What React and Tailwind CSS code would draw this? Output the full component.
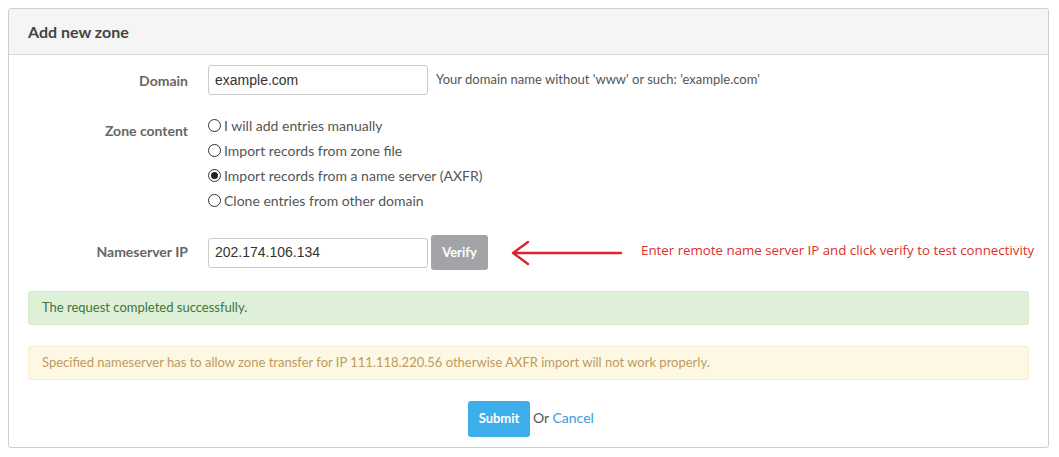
import React from "react";

function Radio({ checked, label }) {
  return (
    <label className="flex items-center h-[25px] text-[14px] text-[#555]">
      <span className="w-[13px] h-[13px] rounded-full border border-[#333] flex items-center justify-center mr-[3px] bg-white">
        {checked && <span className="w-[7px] h-[7px] rounded-full bg-[#222]" />}
      </span>
      <span>{label}</span>
    </label>
  );
}

export default function App() {
  return (
    <div className="bg-white w-[1059px] h-[457px] pt-[8px] pl-[8px]" style={{ fontFamily: "Lato, 'Noto Sans', sans-serif" }}>
      <div className="w-[1041px] h-[440px] border border-[#cfcfcf] rounded-[3px] flex flex-col">
        <div className="h-[46px] bg-[#f5f5f5] border-b border-[#d8d8d8] flex items-center pl-[19px] rounded-t-[3px]">
          <h2 className="text-[16px] font-bold text-[#444]">Add new zone</h2>
        </div>
        <div className="flex flex-col">
          {/* Domain */}
          <div className="flex items-center mt-[10px] h-[30px]">
            <div className="w-[179px] text-right text-[14px] font-bold text-[#666]">Domain</div>
            <div className="ml-[20px] w-[220px] h-[30px] border border-[#ccc] rounded-[3px] flex items-center px-[6px] text-[14px] text-[#333]" style={{ fontFamily: "'Liberation Sans', Arial, sans-serif" }}>
              example.com
            </div>
            <div className="ml-[8px] text-[13px] text-[#555]">Your domain name without 'www' or such: 'example.com'</div>
          </div>
          {/* Zone content */}
          <div className="flex mt-[18px]">
            <div className="w-[179px] text-right text-[14px] font-bold text-[#666] pt-[7px]">Zone content</div>
            <div className="ml-[20px] flex flex-col">
              <Radio label="I will add entries manually" />
              <Radio label="Import records from zone file" />
              <Radio checked label="Import records from a name server (AXFR)" />
              <Radio label="Clone entries from other domain" />
            </div>
          </div>
          {/* Nameserver */}
          <div className="flex items-center mt-[22px] h-[35px]">
            <div className="w-[179px] text-right text-[14px] font-bold text-[#666] -mt-[3px]">Nameserver IP</div>
            <div className="ml-[20px] w-[220px] h-[30px] border border-[#ccc] rounded-[3px] flex items-center px-[6px] text-[14px] text-[#333]" style={{ fontFamily: "'Liberation Sans', Arial, sans-serif" }}>
              202.174.106.134
            </div>
            <button className="ml-[3px] w-[57px] h-[35px] bg-[#a2a4a7] rounded-[3px] text-white text-[13px] font-bold">Verify</button>
            <svg className="ml-[22px]" width="112" height="26" viewBox="0 0 112 26">
              <path d="M3 13 H111 M3 13 L18 2 M3 13 L18 24" stroke="#d9272e" strokeWidth="2.4" fill="none" strokeLinecap="round" />
            </svg>
            <div className="ml-[19px] text-[#d9302c] -mt-[4px]" style={{ fontFamily: "'Open Sans', sans-serif", fontSize: "13.3px" }}>
              Enter remote name server IP and click verify to test connectivity
            </div>
          </div>
          {/* Alerts */}
          <div className="mx-[19px] mt-[21px] h-[34px] bg-[#dff0d8] border border-[#d6e9c6] rounded-[3px] flex items-center px-[13px] text-[13px] text-[#3c763d]">
            The request completed successfully.
          </div>
          <div className="mx-[19px] mt-[21px] h-[34px] bg-[#fcf8e3] border border-[#faebcc] rounded-[3px] flex items-center px-[13px] text-[13px] text-[#c09a60]">
            Specified nameserver has to allow zone transfer for IP 111.118.220.56 otherwise AXFR import will not work properly.
          </div>
          {/* Submit */}
          <div className="flex items-center mt-[21px] pl-[459px]">
            <button className="w-[62px] h-[36px] bg-[#3daee9] rounded-[3px] text-white text-[13px] font-bold">Submit</button>
            <span className="ml-[3px] text-[14px] text-[#555] -mt-[4px]">Or <span className="text-[#3a9ad9]">Cancel</span></span>
          </div>
        </div>
      </div>
    </div>
  );
}
